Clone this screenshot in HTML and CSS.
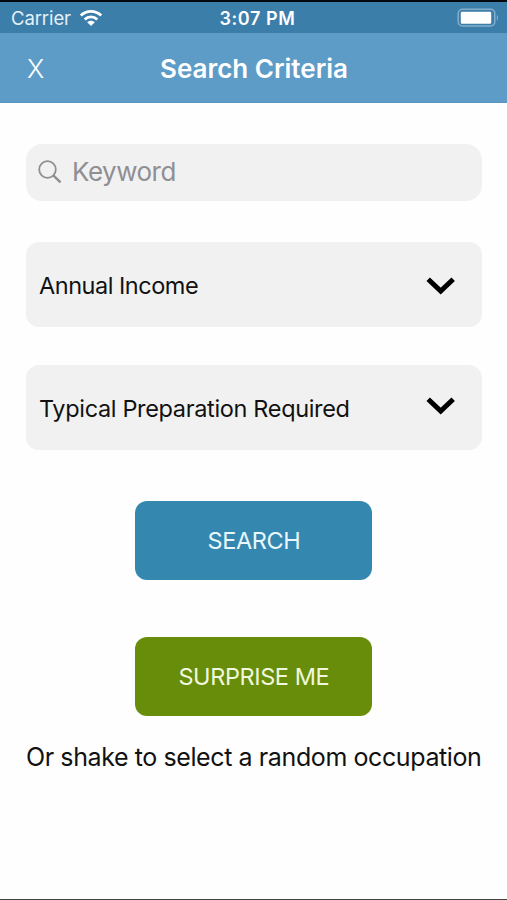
FILE: index.html
```html
<!DOCTYPE html>
<html lang="en">
<head>
<meta charset="utf-8">
<title>Search Criteria</title>
<link rel="stylesheet" href="styles.css">
</head>
<body>
<div class="screen">
  <div class="status">
    <div class="status-left">
      <span class="carrier">Carrier</span>
      <svg class="wifi" width="24" height="18" viewBox="0 0 24 18">
        <path d="M1.8 6.6C7.4 1 16.6 1 22.2 6.6M5.7 10.4C9.2 7 14.8 7 18.3 10.4" fill="none" stroke="#fff" stroke-width="2.8"/>
        <path d="M8.2 13.2C10.3 11.2 13.7 11.2 15.8 13.2L12 17Z" fill="#fff"/>
      </svg>
    </div>
    <span class="time">3:07 PM</span>
    <svg class="battery" width="43" height="20" viewBox="0 0 43 20">
      <rect x="1.2" y="1.2" width="36.6" height="16.8" rx="4.2" fill="none" stroke="#82aecb" stroke-width="1.5"/>
      <rect x="3.8" y="3.7" width="30.4" height="12" rx="1.2" fill="#fff"/>
      <path d="M39.8 6.7Q42.6 9.6 39.8 12.6Z" fill="#82aecb"/>
    </svg>
  </div>
  <header class="nav">
    <span class="close">X</span>
    <h1 class="title">Search Criteria</h1>
  </header>
  <main class="content">
    <div class="field keyword">
      <svg class="glass" width="26" height="26" viewBox="0 0 26 26" fill="none" stroke="#8f8f93">
        <circle cx="10.5" cy="10.5" r="8.3" stroke-width="1.8"/>
        <path d="M16.3 16.3L23.5 23.4" stroke-width="2.4"/>
      </svg>
      <span class="placeholder">Keyword</span>
    </div>
    <div class="field select income">
      <span class="label-income">Annual Income</span>
      <svg class="chevron" width="30" height="20" viewBox="0 0 30 20"><path d="M2.2 3.3L14.7 15.1L27.2 3.3" fill="none" stroke="#000" stroke-width="5"/></svg>
    </div>
    <div class="field select prep">
      <span class="label-prep">Typical Preparation Required</span>
      <svg class="chevron" width="30" height="20" viewBox="0 0 30 20"><path d="M2.2 3.3L14.7 15.1L27.2 3.3" fill="none" stroke="#000" stroke-width="5"/></svg>
    </div>
    <div class="button search"><span>SEARCH</span></div>
    <div class="button surprise"><span>SURPRISE ME</span></div>
    <p class="hint">Or shake to select a random occupation</p>
  </main>
</div>
</body>
</html>
```
FILE: styles.css
```css
* { box-sizing: border-box; }
body { margin: 0; background: #fefefe; }
.screen {
  width: 507px;
  height: 900px;
  display: flex;
  flex-direction: column;
  border-top: 2px solid #03090e;
  border-bottom: 1px solid #444;
  font-family: Inter, "Liberation Sans", sans-serif;
  color: #111;
  white-space: nowrap;
  overflow: hidden;
}
.status {
  height: 31px;
  flex: none;
  display: grid;
  grid-template-columns: 1fr auto 1fr;
  align-items: center;
  padding: 1px 7px 0 11px;
  background: #3c7eaa;
  color: #fff;
}
.status-left { display: flex; align-items: center; gap: 8px; }
.wifi { margin-bottom: 1px; }
.carrier { color: #e6f1f8; font-size: 18.5px; letter-spacing: -0.1px; }
.time { font-weight: 600; font-size: 18px; letter-spacing: 0.6px; padding-left: 4px; }
.battery { justify-self: end; margin-bottom: 1px; }
.nav {
  height: 70px;
  flex: none;
  display: grid;
  grid-template-columns: 1fr auto 1fr;
  align-items: center;
  padding: 1px 26px 0 27px;
  background: #5e9cc8;
  border-bottom: 1px solid #5692bd;
  color: #fff;
}
.close { font-size: 26px; font-weight: 300; }
.title { margin: 0; font-size: 26px; font-weight: 600; }
.content { display: flex; flex-direction: column; padding: 41px 25px 0 26px; }
.field { display: flex; align-items: center; background: #f1f1f1; }
.keyword { height: 57px; border-radius: 16px; padding: 0 0 2px 11px; color: #8f8f93; }
.glass { margin-right: 9px; }
.placeholder { font-size: 26px; letter-spacing: -0.5px; }
.select { height: 85px; border-radius: 13px; justify-content: space-between; padding: 2px 26px 0 13px; font-size: 23.5px; }
.label-income { letter-spacing: -0.48px; }
.label-prep { letter-spacing: -0.34px; }
.income { margin-top: 41px; }
.prep { margin-top: 38px; }
.prep .chevron { margin-bottom: 5px; }
.button {
  width: 237px;
  height: 79px;
  margin-left: 109.4px;
  display: flex;
  align-items: center;
  justify-content: center;
  border-radius: 12px;
  font-size: 23.5px;
  letter-spacing: -0.4px;
}
.search { margin-top: 51px; background: #3487ae; color: #e9f6fc; }
.surprise { margin-top: 57px; background: #688d0b; color: #eff8dc; }
.hint { margin: 25px 0 0; font-size: 25px; line-height: 32px; letter-spacing: -0.4px; }
```
